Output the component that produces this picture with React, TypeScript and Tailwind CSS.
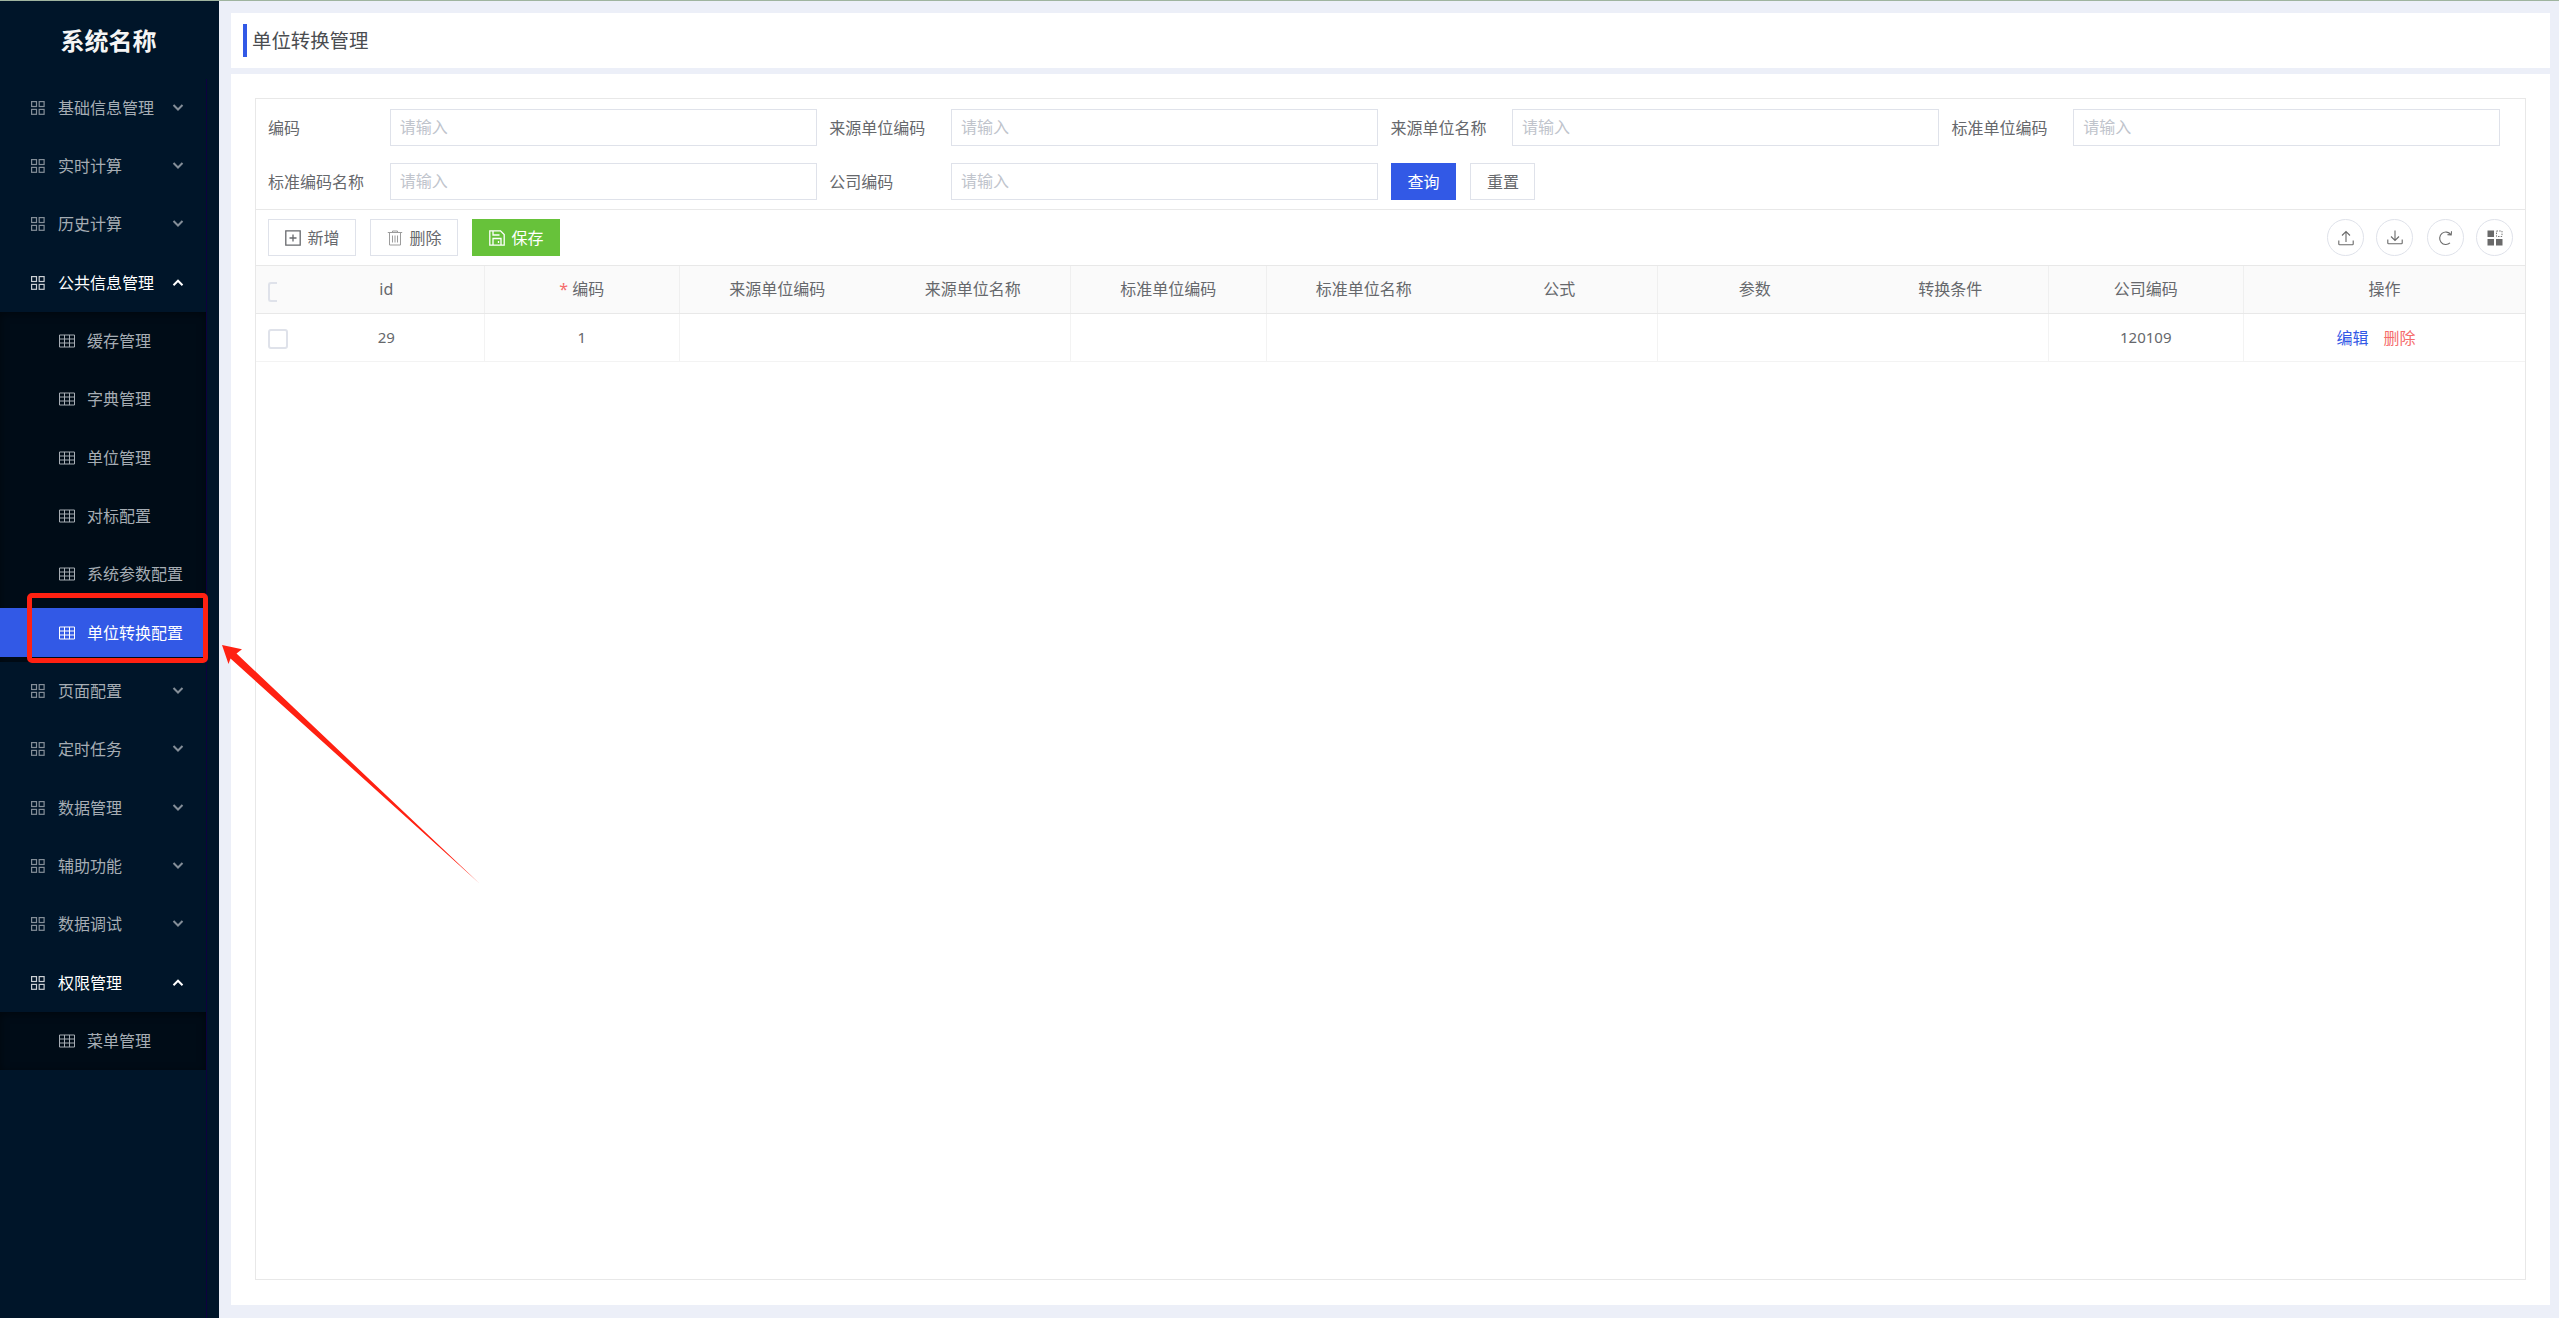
import { ReactNode } from "react";
import clsx from "clsx";

type MenuEntry = { title: string; children?: string[] };

const menu: MenuEntry[] = [
  { title: "基础信息管理" },
  { title: "实时计算" },
  { title: "历史计算" },
  {
    title: "公共信息管理",
    children: ["缓存管理", "字典管理", "单位管理", "对标配置", "系统参数配置", "单位转换配置"],
  },
  { title: "页面配置" },
  { title: "定时任务" },
  { title: "数据管理" },
  { title: "辅助功能" },
  { title: "数据调试" },
  { title: "权限管理", children: ["菜单管理"] },
];

const activeItem = "单位转换配置";

const fields = ["编码", "来源单位编码", "来源单位名称", "标准单位编码", "标准编码名称", "公司编码"];

const columns = [
  { title: "id", value: "29", line: true },
  { title: "编码", value: "1", line: true, required: true },
  { title: "来源单位编码", value: "" },
  { title: "来源单位名称", value: "", line: true },
  { title: "标准单位编码", value: "", line: true },
  { title: "标准单位名称", value: "" },
  { title: "公式", value: "", line: true },
  { title: "参数", value: "" },
  { title: "转换条件", value: "", line: true },
  { title: "公司编码", value: "120109", line: true },
];

function AppIcon() {
  return (
    <svg className="h-[14px] w-[14px]" viewBox="0 0 14 14" fill="none" stroke="currentColor" strokeWidth="1.2">
      <rect x="0.6" y="0.6" width="4.9" height="4.9" />
      <rect x="8.2" y="0.6" width="4.9" height="4.9" />
      <rect x="0.6" y="8.4" width="4.9" height="4.9" />
      <rect x="8.2" y="8.4" width="4.9" height="4.9" />
    </svg>
  );
}

function TableIcon() {
  return (
    <svg className="h-[14px] w-4" viewBox="0 0 16 14" fill="none" stroke="currentColor" strokeWidth="1">
      <path d="M.5 1h15v12H.5zM.5 5h15M.5 9h15M5.5 1v12M10.5 1v12" />
    </svg>
  );
}

function Chevron({ up }: { up?: boolean }) {
  return (
    <svg
      className={clsx("ml-auto h-3 w-3", !up && "opacity-80")}
      viewBox="0 0 12 12"
      fill="none"
      stroke="currentColor"
      strokeWidth="2"
    >
      <path d={up ? "M1.5 8.2 6 3.7l4.5 4.5" : "M1.5 3 6 7.5 10.5 3"} />
    </svg>
  );
}

function Sidebar() {
  return (
    <aside className="flex w-[219px] shrink-0 flex-col bg-[#001529]">
      <h1 className="flex h-[77.67px] items-center justify-center pt-0.5 text-2xl font-bold text-[#f5f5f5]">
        <span className="-ml-0.5">系统名称</span>
      </h1>
      <nav className="w-[206.5px] flex-1 border-r border-[#0d0040]">
        {menu.map((m) => (
          <div key={m.title}>
            <div
              className={clsx(
                "flex h-[58.33px] items-center pl-[31px] pr-[22px] text-base",
                m.children ? "text-white" : "text-[#a6adb4]"
              )}
            >
              <span className="opacity-80"><AppIcon /></span>
              <span className="ml-[13px]">{m.title}</span>
              <Chevron up={!!m.children} />
            </div>
            {m.children && (
              <div className="bg-[#000c17] shadow-[inset_0_2px_9px_rgba(0,0,0,0.45)]">
                {m.children.map((c) => (
                  <div key={c} className="flex h-[58.33px] items-center">
                    <div
                      className={clsx(
                        "flex h-[49px] w-full items-center pl-[59px] text-base",
                        c === activeItem ? "bg-[#3259e6] text-white" : "text-[#a6adb4]"
                      )}
                    >
                      <TableIcon />
                      <span className="ml-3">{c}</span>
                    </div>
                  </div>
                ))}
              </div>
            )}
          </div>
        ))}
      </nav>
    </aside>
  );
}

function Button({ className, children }: { className?: string; children: ReactNode }) {
  return (
    <button className={clsx("flex h-[37px] items-center justify-center border text-base", className)}>
      {children}
    </button>
  );
}

function RoundButton({ children }: { children: ReactNode }) {
  return (
    <button className="flex h-[37px] w-[37px] items-center justify-center rounded-full border border-[#dfe2ea] text-[#6a6a6a]">
      {children}
    </button>
  );
}

function SearchForm() {
  return (
    <form className="grid grid-cols-[repeat(4,561.2px)] gap-y-[17px] border-b border-[#e8e8e8] pb-[9px] pt-[10px]">
      {fields.map((f) => (
        <label key={f} className="flex h-[37px] items-center pl-3 text-base text-[#66686c]">
          <span className="w-[121.7px] shrink-0">{f}</span>
          <input
            placeholder="请输入"
            className="h-[37px] w-[427px] border border-[#dfe2ea] px-[9px] pb-0.5 text-base placeholder:text-[#c0c4cc]"
          />
        </label>
      ))}
      <div className="flex gap-[14.5px] pl-[12.6px]">
        <Button className="w-[65px] border-[#3259e6] bg-[#3259e6] text-white">查询</Button>
        <Button className="w-[65px] border-[#dfe2ea] text-[#66686c]">重置</Button>
      </div>
    </form>
  );
}

function Toolbar() {
  return (
    <div className="flex h-14 items-center border-b border-[#e8e8e8] pl-3 pr-3">
      <div className="flex gap-[14px]">
        <Button className="w-[88px] gap-1.5 border-[#dfe2ea] pl-px text-[#66686c]">
          <svg className="h-4 w-4" viewBox="0 0 16 16" fill="none" stroke="currentColor" strokeWidth="1.3">
            <path d="M.8.8h14.4v14.4H.8zM8 4.5v7M4.5 8h7" />
          </svg>
          新增
        </Button>
        <Button className="w-[88px] gap-1.5 border-[#dfe2ea] pl-px text-[#66686c]">
          <svg className="h-4 w-4 text-[#9c9c9c]" viewBox="0 0 16 16" fill="none" stroke="currentColor" strokeWidth="1">
            <path d="M.8 2.5h14.4M5.500 2.5V1h5v1.500M2.500 2.500v12.500h11V2.500M5.500 5.500v7M8 5.500v7M10.500 5.500v7" />
          </svg>
          删除
        </Button>
        <Button className="w-[88px] gap-1.5 border-[#67c23a] bg-[#67c23a] pl-px text-white">
          <svg className="h-4 w-4" viewBox="0 0 16 16" fill="none" stroke="currentColor" strokeWidth="1.3">
            <path d="M.8.8h10.700l3.700 3.700v10.700H.8zM4 15V8.500h8V15M4 1v4h6.500M9.500 11v2" />
          </svg>
          保存
        </Button>
      </div>
      <div className="ml-auto flex">
        <RoundButton>
          <svg className="h-4 w-4" viewBox="0 0 16 16" fill="none" stroke="currentColor" strokeWidth="1.1">
            <path d="M8 12V2M4 5.500 8 1.500l4 4M.8 10.500v3.500q0 .8.8.8h12.800q.8 0 .8-.8v-3.500" />
          </svg>
        </RoundButton>
        <span className="w-3" />
        <RoundButton>
          <svg className="h-4 w-4" viewBox="0 0 16 16" fill="none" stroke="currentColor" strokeWidth="1.1">
            <path d="M8 .5v10M4 6.500l4 4 4-4M.8 9.500V13q0 .8.8.8h12.800q.8 0 .8-.8V9.500" />
          </svg>
        </RoundButton>
        <span className="w-3.5" />
        <RoundButton>
          <svg className="h-4 w-4" viewBox="0 0 16 16" fill="none" stroke="currentColor" strokeWidth="1.1">
            <path d="M12 12.900A6.200 6.200 0 1 1 12.800 4.500M13.500 1.200 13.200 5 9.500 4.600" />
          </svg>
        </RoundButton>
        <span className="w-3" />
        <RoundButton>
          <svg className="h-4 w-4" viewBox="0 0 16 16">
            <path fill="currentColor" d="M.5.500H7V7H.500zM.500 9H7v6.500H.500zM9 9h6.500v6.500H9z" />
            <path d="M9.500 1H15v5.500H9.500z" fill="none" stroke="currentColor" strokeDasharray="1.5 1.2" strokeWidth=".9" />
          </svg>
        </RoundButton>
      </div>
    </div>
  );
}

function DataTable() {
  return (
    <div className="text-base text-[#66686c]">
      <div className="flex h-12 border-b border-[#e8e8e8] bg-[#fafafa]">
        <div className="flex w-[33px] items-center pl-3 pt-1">
          <div className="h-5 w-[9px] rounded-l-[3px] border-2 border-r-0 border-[#dfe2ea]" />
        </div>
        {columns.map((c) => (
          <div
            key={c.title}
            className={clsx(
              "flex w-[195.5px] items-center justify-center border-r pb-px",
              c.line ? "border-[#efefef]" : "border-transparent"
            )}
          >
            {c.required && <span className="mr-1 text-[#f56c6c]">*</span>}
            {c.title}
          </div>
        ))}
        <div className="flex flex-1 items-center justify-center pb-px">操作</div>
      </div>
      <div className="flex h-12 border-b border-[#f3f3f3]">
        <div className="flex w-[33px] items-center pl-3 pt-0.5">
          <div className="h-5 w-5 rounded-[3px] border-2 border-[#dfe2ea]" />
        </div>
        {columns.map((c) => (
          <div
            key={c.title}
            className={clsx(
              "flex w-[195.5px] items-center justify-center border-r text-[15px]",
              c.line ? "border-[#f3f3f3]" : "border-transparent"
            )}
          >
            {c.value}
          </div>
        ))}
        <div className="flex flex-1 items-center justify-center gap-[15px] pr-[17px]">
          <a className="text-[#3259e6]">编辑</a>
          <a className="text-[#f56c6c]">删除</a>
        </div>
      </div>
    </div>
  );
}

export default function App() {
  return (
    <div className="relative flex h-[1318px] w-[2559px] overflow-hidden border-t border-[#9fb49f] bg-[#eceff8] font-['Noto_Sans','Noto_Sans_CJK_SC',sans-serif]">
      <Sidebar />
      <main className="flex flex-1 flex-col pb-[13px] pl-3 pr-[9px] pt-3">
        <header className="flex h-[55px] items-center bg-white pl-3">
          <div className="h-[33px] w-1 bg-[#3259e6]" />
          <h2 className="ml-[5px] text-[19.4px] text-[#4a4c50]">单位转换管理</h2>
        </header>
        <section className="mt-1.5 flex flex-1 flex-col bg-white p-6 pb-[25px]">
          <div className="flex-1 border border-[#e8e8e8]">
            <SearchForm />
            <Toolbar />
            <DataTable />
          </div>
        </section>
      </main>

      {/* highlight box and pointer over the active item */}
      <div className="absolute left-[26.5px] top-[592px] h-[70px] w-[181px] rounded-[5px] border-[5px] border-[#ff2112]" />
      <svg className="absolute left-[220px] top-[643px] h-[242px] w-[262px]" viewBox="220 644 262 242" fill="#ff2112">
        <path d="M222 645 242 649.3 236.5 653.5 479.5 883.5 230.5 658.5 228.5 664z" />
      </svg>
    </div>
  );
}
